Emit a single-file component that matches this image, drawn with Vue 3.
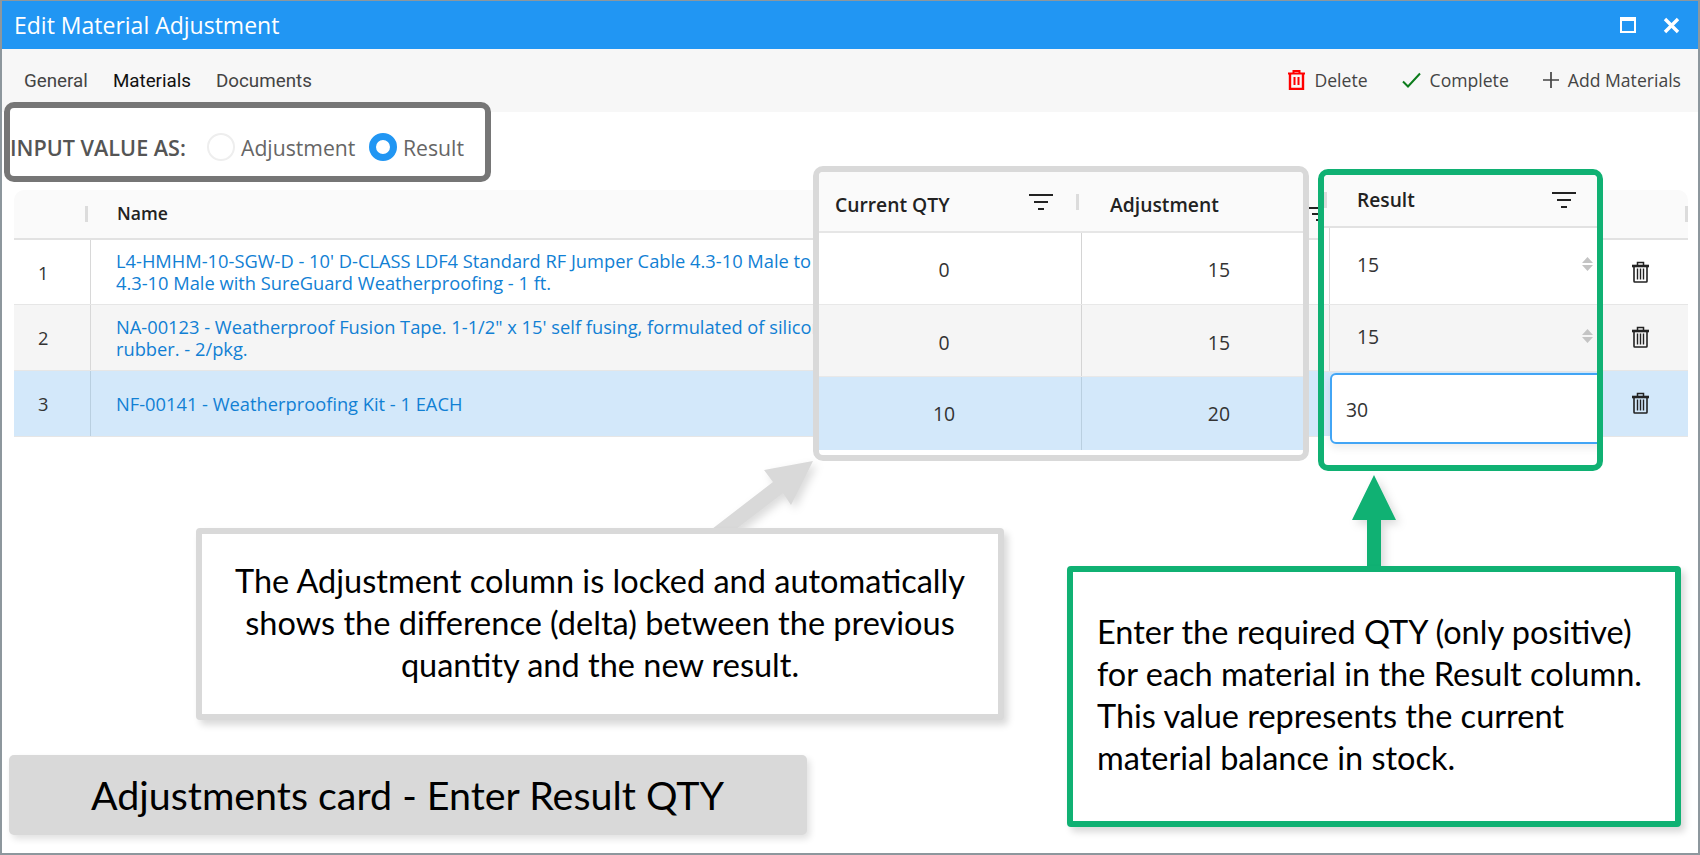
<script setup>
const rows = [
  { n: 1, cls: 'odd', lines: ["L4-HMHM-10-SGW-D - 10' D-CLASS LDF4 Standard RF Jumper Cable 4.3-10 Male to", '4.3-10 Male with SureGuard Weatherproofing - 1 ft.'] },
  { n: 2, cls: 'even', lines: ['NA-00123 - Weatherproof Fusion Tape. 1-1/2" x 15\' self fusing, formulated of silicone', 'rubber. - 2/pkg.'] },
  { n: 3, cls: 'sel', lines: ['NF-00141 - Weatherproofing Kit - 1 EACH'] },
]
const qty = [
  { cur: 0, adj: 15, cls: 'odd' },
  { cur: 0, adj: 15, cls: 'even' },
  { cur: 10, adj: 20, cls: 'sel' },
]
</script>

<template>
  <div class="window">
    <header class="titlebar">
      <span class="title">Edit Material Adjustment</span>
      <div class="win-btns">
        <svg width="16" height="16" viewBox="0 0 16 16"><path d="M1 1h14v14H1z M1 3h14" fill="none" stroke="#fff" stroke-width="2"/><path d="M0 0h16v4H0z" fill="#fff"/></svg>
        <svg width="17" height="17" viewBox="0 0 17 17"><path d="M2 2l13 13M15 2L2 15" fill="none" stroke="#fff" stroke-width="3.4"/></svg>
      </div>
    </header>

    <nav class="toolbar">
      <div class="tabs">
        <span>General</span>
        <span class="active">Materials</span>
        <span>Documents</span>
      </div>
      <div class="actions">
        <span class="action">
          <svg width="17" height="20" viewBox="0 0 17 20"><path d="M0 3.5h17M5.5 3V1h6v2" fill="none" stroke="#f00" stroke-width="2"/><path d="M2 4v15h13V4" fill="none" stroke="#f00" stroke-width="2.4"/><path d="M6.5 7v8M10.5 7v8" stroke="#f00" stroke-width="2"/></svg>
          Delete
        </span>
        <span class="action">
          <svg width="19" height="16" viewBox="0 0 19 16"><path d="M1 9.5l5 5L18 1.5" fill="none" stroke="#0c7c1c" stroke-width="2"/></svg>
          Complete
        </span>
        <span class="action">
          <svg width="16" height="16" viewBox="0 0 16 16"><path d="M8 0v16M0 8h16" stroke="#444" stroke-width="1.7"/></svg>
          Add Materials
        </span>
      </div>
    </nav>

    <div class="input-as">
      <b>INPUT VALUE AS:</b>
      <span class="radio"></span>
      <span class="radio-label first">Adjustment</span>
      <span class="radio on"></span>
      <span class="radio-label">Result</span>
    </div>

    <section class="table">
      <div class="thead">
        <span class="th-num"><i class="grip"></i></span>
        <span class="th-name">Name</span>
        <svg class="cut-filter" width="22" height="16" viewBox="0 0 22 16"><path d="M0 2h22M4 8h14M8 14h6" stroke="#222" stroke-width="2"/></svg>
        <span></span>
        <span class="th-end"><i class="grip"></i></span>
      </div>
      <div v-for="r in rows" :key="r.n" class="tr" :class="r.cls">
        <span class="num">{{ r.n }}</span>
        <span class="name">
          <a v-for="l in r.lines" :key="l">{{ l }}</a>
        </span>
        <span class="del">
          <svg width="17" height="22" viewBox="0 0 17 22"><path d="M0 5h17" stroke="#222" stroke-width="2.6"/><path d="M5.5 4V1.5h6V4" fill="none" stroke="#222" stroke-width="1.5"/><path d="M2 6v14.2c0 .5.4.8.8.8h11.4c.4 0 .8-.3.8-.8V6" fill="none" stroke="#222" stroke-width="1.6"/><path d="M5.5 7.5v11M8.5 7.5v11M11.5 7.5v11" stroke="#222" stroke-width="1.4"/></svg>
        </span>
      </div>
    </section>

    <!-- Annotations laid over the screenshot -->
    <div class="panel grey">
      <div class="p-head">
        <span class="p-col">
          Current QTY
          <svg class="filter" width="24" height="18" viewBox="0 0 24 18"><path d="M0 2h24M5 9h14M9 16h6" stroke="#222" stroke-width="2.2"/></svg>
          <i class="grip"></i>
        </span>
        <span class="p-col second">Adjustment</span>
      </div>
      <div v-for="(q, i) in qty" :key="i" class="p-row" :class="q.cls">
        <span class="c-cur">{{ q.cur }}</span>
        <span class="c-adj">{{ q.adj }}</span>
      </div>
    </div>

    <div class="panel green">
      <div class="g-head">
        <i class="grip"></i>
        <span>Result</span>
        <svg width="24" height="18" viewBox="0 0 24 18"><path d="M0 2h24M5 9h14M9 16h6" stroke="#222" stroke-width="2.2"/></svg>
      </div>
      <div class="g-row odd tall">
        <span>15</span>
        <svg class="spin" width="11" height="14" viewBox="0 0 11 14"><path d="M5.5 0L11 6H0zM5.5 14L0 8h11z" fill="#c4c4c4"/></svg>
      </div>
      <div class="g-row even">
        <span>15</span>
        <svg class="spin" width="11" height="14" viewBox="0 0 11 14"><path d="M5.5 0L11 6H0zM5.5 14L0 8h11z" fill="#c4c4c4"/></svg>
      </div>
      <div class="g-edit"><div class="g-input">30</div></div>
    </div>

    <svg class="arrows" width="1700" height="855" viewBox="0 0 1700 855">
      <polygon class="a-shadow" points="813,461 764,470 773,482 712,529 736,529 783,493 791,505" fill="#d9d9d9"/>
      <polygon class="a-shadow" points="1374,475 1396,520 1381,520 1381,567 1367,567 1367,520 1352,520" fill="#10b173"/>
    </svg>

    <div class="callout c-grey">
      The Adjustment column is locked and automatically<br>
      shows the difference (delta) between the previous<br>
      quantity and the new result.
    </div>
    <div class="callout c-green">
      Enter the required QTY (only positive)<br>
      for each material in the Result column.<br>
      This value represents the current<br>
      material balance in stock.
    </div>
    <div class="caption">Adjustments card - Enter Result QTY</div>
  </div>
</template>

<style>
html, body { margin: 0; background: #fff; }
</style>

<style scoped>
.window {
  position: relative;
  box-sizing: border-box;
  width: 1700px;
  height: 855px;
  overflow: hidden;
  display: flex;
  flex-direction: column;
  border: solid #8d979d;
  border-width: 1px 2px 2px 2px;
  background: #fff;
  font-family: "Open Sans", "Noto Sans", sans-serif;
  color: #333;
}
.titlebar {
  flex: none;
  height: 48px;
  background: #2196f3;
  color: #fff;
  display: flex;
  align-items: center;
  justify-content: space-between;
  padding: 0 18px 0 12px;
}
.title { font-size: 23px; }
.win-btns { display: flex; align-items: center; gap: 27px; }
.toolbar {
  flex: none;
  height: 63px;
  padding: 0 17px 2px 22px;
  box-sizing: border-box;
  background: #f7f7f7;
  display: flex;
  align-items: center;
  justify-content: space-between;
}
.tabs { display: flex; gap: 25px; padding-top: 2px; font: 18.8px Roboto, sans-serif; color: #444; }
.tabs .active { color: #111; }
.actions { display: flex; gap: 34px; font-size: 17.6px; color: #444; }
.action { display: flex; align-items: center; gap: 9px; }

.input-as {
  flex: none;
  box-sizing: border-box;
  width: 487px;
  height: 80px;
  margin: -10px 0 0 2px;
  padding-top: 10px;
  border: 6px solid #767676;
  border-radius: 10px;
  background: #fff;
  display: flex;
  align-items: center;
  color: #666;
  font-size: 21.2px;
}
.input-as b { font-weight: 600; color: #555; width: 197px; white-space: nowrap; flex: none; font-size: 21.6px; }
.radio {
  box-sizing: border-box;
  flex: none;
  width: 28px;
  height: 28px;
  border-radius: 50%;
  border: 2px solid #eee;
  background: #fff;
}
.radio.on { border: 7px solid #2196f3; }
.radio-label { margin-left: 6px; }
.radio-label.first { width: 128px; }

.table { flex: none; margin: 8px 0 0 12px; width: 1674px; font-size: 18.3px; }
.thead {
  height: 50px;
  box-sizing: border-box;
  background: #fafafa;
  border-bottom: 2px solid #e2e2e2;
  border-radius: 10px 10px 0 0;
  display: grid;
  grid-template-columns: 77px 1fr 22px 262px 96px;
  align-items: center;
  font-weight: 600;
  color: #222;
}
.th-num { display: flex; justify-content: flex-end; padding-right: 3px; }
.th-name { padding-left: 26px; padding-bottom: 3px; font-size: 17.6px; }
.th-end { display: flex; justify-content: flex-end; }
.grip { display: block; width: 3px; height: 16px; background: #dcdcdc; }
.tr {
  box-sizing: border-box;
  height: 66px;
  display: grid;
  grid-template-columns: 77px 1fr 96px;
  border-bottom: 1px solid #e6e6e6;
  overflow: hidden;
}
.tr.odd { background: #fff; height: 65px; }
.tr.even { background: #f5f5f5; }
.tr.sel { background: #d3e8fa; }
.num {
  display: flex;
  align-items: center;
  padding-left: 24px;
  border-right: 1px solid #d8d8d8;
}
.sel .num { border-right-color: #b9cfe0; }
.name {
  display: flex;
  flex-direction: column;
  justify-content: center;
  padding-left: 25px;
  line-height: 22px;
  white-space: nowrap;
  overflow: hidden;
  color: #1180d4;
}
.del { display: flex; align-items: center; justify-content: center; margin-top: -1px; }

.panel { position: absolute; box-sizing: border-box; border-style: solid; border-width: 6px; overflow: hidden; background: #fff; }
.grey { left: 811px; top: 165px; width: 496px; height: 295px; border-color: #d9d9d9; border-radius: 10px; }
.p-head {
  display: grid;
  grid-template-columns: 263px 1fr;
  height: 61px;
  box-sizing: border-box;
  background: #fafafa;
  border-bottom: 2px solid #e6e6e6;
  font-weight: 600;
  font-size: 19.3px;
  color: #222;
  align-items: center;
}
.p-col { display: flex; align-items: center; padding-left: 16px; padding-top: 6px; white-space: nowrap; position: relative; }
.p-col.second { padding-left: 28px; }
.p-col .filter { position: absolute; left: 210px; top: 8px; }
.p-col .grip { position: absolute; left: 257px; top: 9px; }
.p-row { display: grid; grid-template-columns: 263px 1fr; height: 72px; font-size: 19.4px; border-bottom: 1px solid #e8e8e8; box-sizing: border-box; }
.p-row:last-child { height: 73px; border-bottom: 0; }
.p-row.odd { background: #fff; }
.p-row.even { background: #f5f5f5; }
.p-row.sel { background: #d3e8fa; }
.c-cur, .c-adj { display: flex; align-items: center; padding-top: 2px; }
.p-row.even .c-cur, .p-row.even .c-adj { padding-top: 3px; }
.p-row.sel .c-cur, .p-row.sel .c-adj { padding-top: 0; }
.c-cur { justify-content: center; padding-right: 12px; border-right: 1px solid #d4d4d4; box-sizing: border-box; }
.sel .c-cur { border-right-color: #b9cfe0; }
.c-adj { justify-content: flex-end; padding-right: 73px; }

.green { left: 1316px; top: 168px; width: 285px; height: 302px; border-color: #10b173; border-radius: 10px; }
.g-head {
  height: 53px;
  box-sizing: border-box;
  background: #fafafa;
  border-bottom: 2px solid #e2e2e2;
  display: flex;
  align-items: center;
  font-weight: 600;
  font-size: 19.2px;
  color: #222;
  position: relative;
  padding-left: 33px;
  padding-bottom: 2px;
}
.g-head .grip { position: absolute; left: 0; top: 17px; }
.g-head svg { position: absolute; left: 228px; top: 16px; }
.g-row {
  height: 67px;
  box-sizing: border-box;
  display: flex;
  align-items: center;
  justify-content: space-between;
  padding: 0 4px 4px 33px;
  font-size: 19.4px;
  border-bottom: 1px solid #e6e6e6;
  background-image: linear-gradient(#d8d8d8, #d8d8d8);
  background-size: 1px 100%;
  background-position: 5px 0;
  background-repeat: no-repeat;
}
.g-row.tall { height: 77px; }
.g-row.odd { background-color: #fff; }
.g-row.even { background-color: #f5f5f5; }
.g-edit { padding: 1px 0 0 6px; box-sizing: border-box; background: linear-gradient(#d3e8fa 64px, #fff 64px); height: 72px; }
.g-input {
  box-sizing: border-box;
  width: 290px;
  height: 71px;
  background: #fff;
  border: 2px solid #42a5f5;
  border-radius: 6px;
  display: flex;
  align-items: center;
  padding: 2px 0 0 14px;
  font-size: 19.4px;
  box-shadow: 0 4px 8px rgba(0,0,0,.08);
}

.arrows { position: absolute; left: -2px; top: -1px; pointer-events: none; }
.a-shadow { filter: drop-shadow(4px 4px 4px rgba(0,0,0,.14)); }

.callout {
  position: absolute;
  box-sizing: border-box;
  background: #fff;
  border: 6px solid;
  border-radius: 4px;
  font-family: Lato, "Open Sans", sans-serif;
  font-size: 32.5px;
  line-height: 42px;
  color: #000;
  box-shadow: 4px 5px 7px rgba(0,0,0,.15);
  white-space: nowrap;
}
.c-grey {
  left: 194px; top: 527px; width: 808px; height: 192px;
  border-color: #d9d9d9;
  text-align: center;
  padding-top: 26px;
}
.c-green {
  left: 1065px; top: 565px; width: 614px; height: 261px;
  border-color: #10b173;
  padding: 39px 0 0 24px;
}
.caption {
  position: absolute;
  left: 7px; top: 754px; width: 798px; height: 80px;
  background: #d9d9d9;
  border-radius: 5px;
  box-shadow: 3px 4px 7px rgba(0,0,0,.12);
  font-family: Lato, "Open Sans", sans-serif;
  font-size: 39.4px;
  color: #000;
  display: flex;
  align-items: center;
  padding: 0 0 2px 82px;
  box-sizing: border-box;
  white-space: nowrap;
}
</style>
